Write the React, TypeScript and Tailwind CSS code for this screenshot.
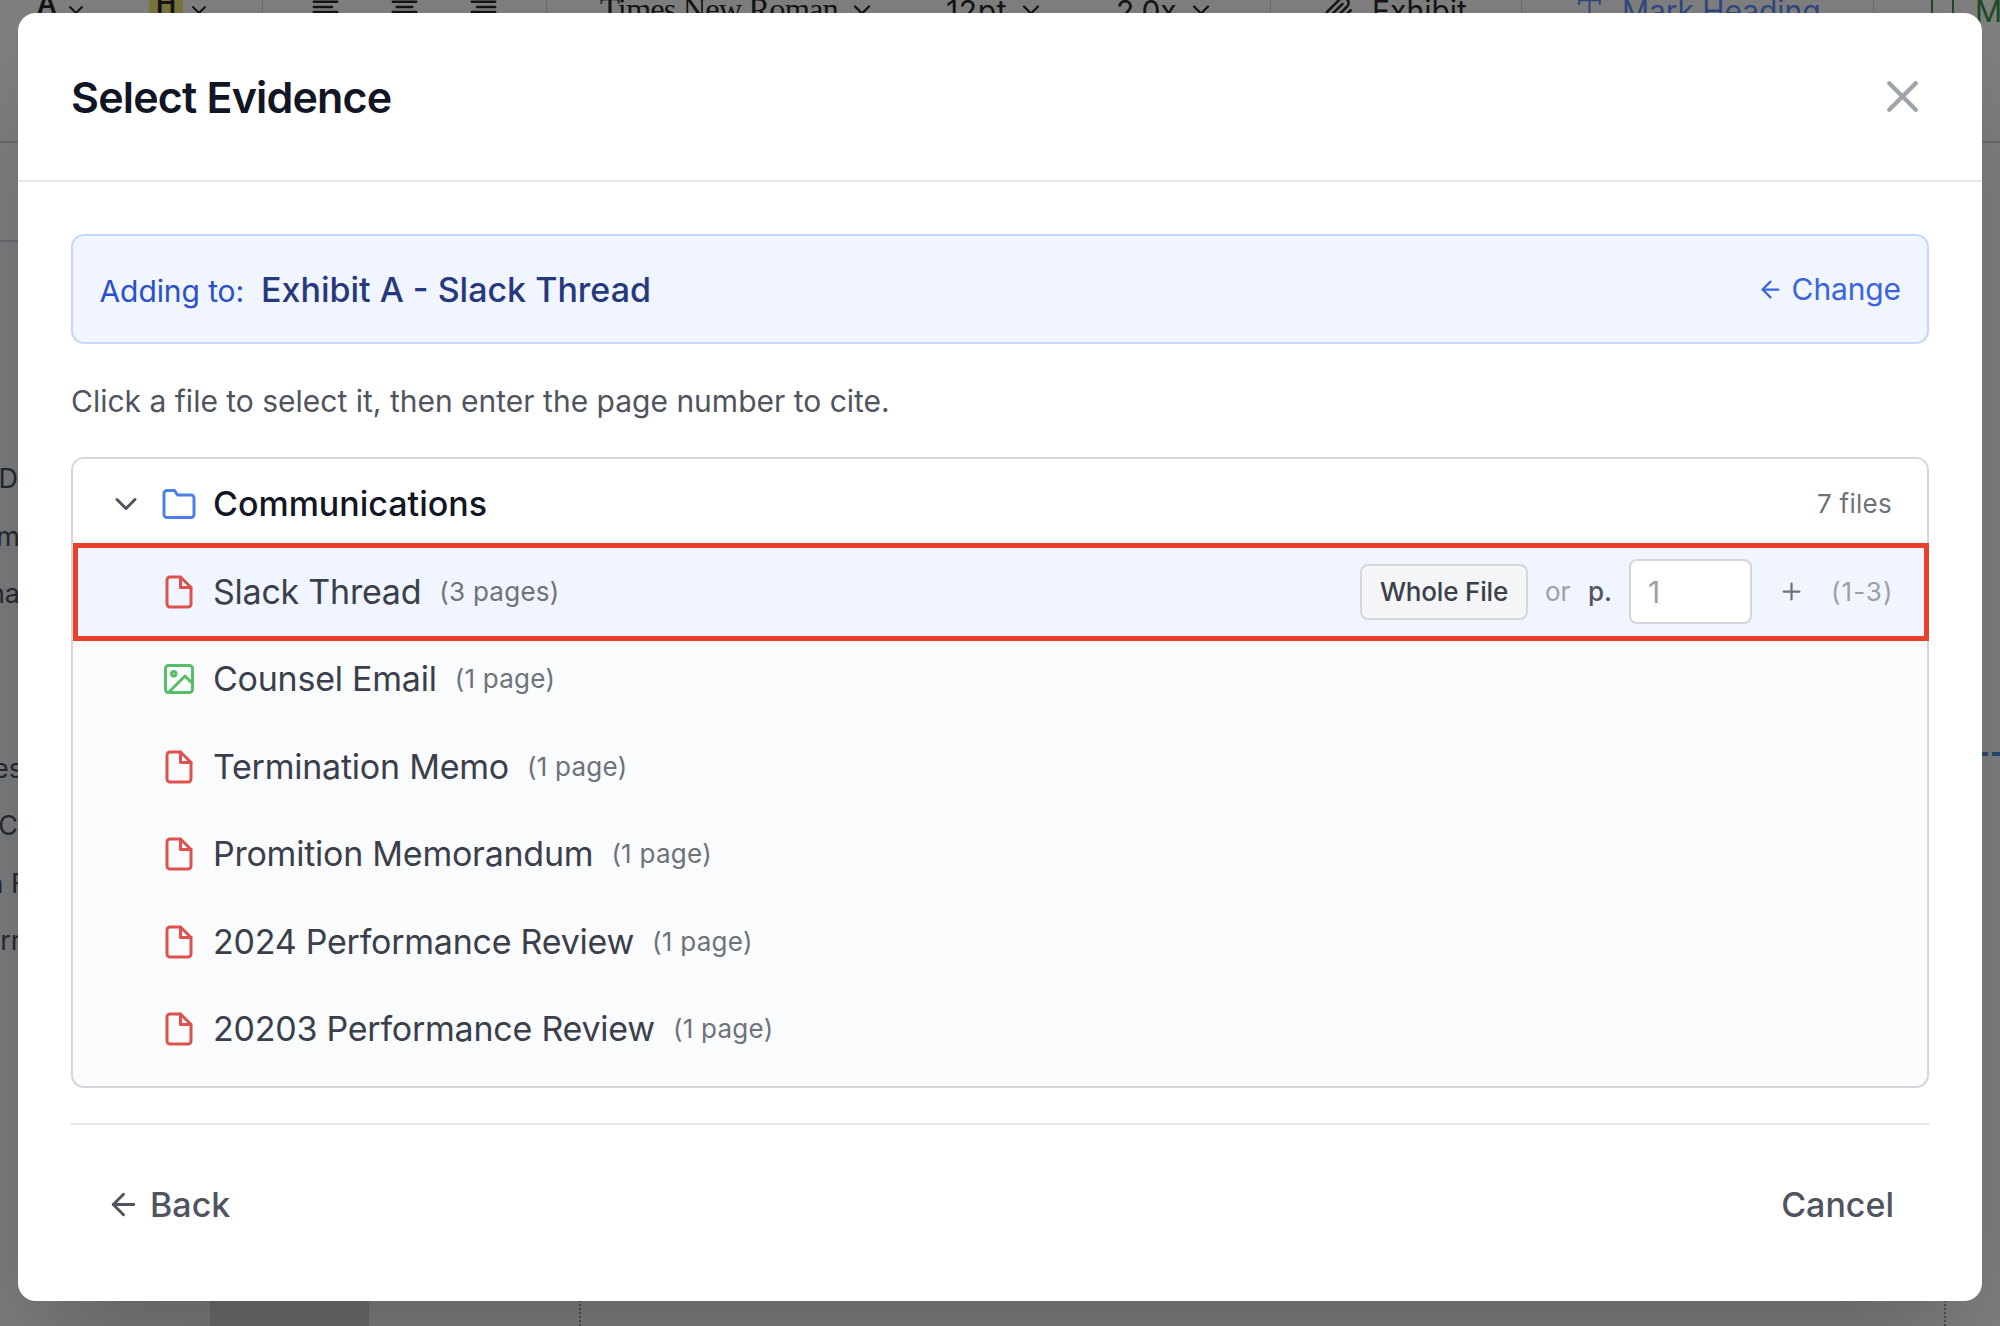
import type { ReactNode } from 'react';

type IconProps = { className?: string; strokeWidth?: number; children?: ReactNode };

function Icon({ className, strokeWidth = 2, children }: IconProps) {
  return (
    <svg
      className={className}
      viewBox="0 0 24 24"
      fill="none"
      stroke="currentColor"
      strokeWidth={strokeWidth}
      strokeLinecap="round"
      strokeLinejoin="round"
    >
      {children}
    </svg>
  );
}

const ChevronDown = (p: IconProps) => (
  <Icon {...p}>
    <polyline points="6 9 12 15 18 9" />
  </Icon>
);

const ArrowLeft = (p: IconProps) => (
  <Icon {...p}>
    <line x1="19" y1="12" x2="5" y2="12" />
    <polyline points="12 19 5 12 12 5" />
  </Icon>
);

const FileIcon = (p: IconProps) => (
  <Icon {...p}>
    <path d="M13 2H6a2 2 0 0 0-2 2v16a2 2 0 0 0 2 2h12a2 2 0 0 0 2-2V9z" />
    <polyline points="13 2 13 9 20 9" />
  </Icon>
);

const ImageIcon = (p: IconProps) => (
  <Icon {...p}>
    <rect x="3" y="3" width="18" height="18" rx="2" />
    <circle cx="8.5" cy="8.5" r="1.5" />
    <polyline points="21 15 16 10 5 21" />
  </Icon>
);

const FolderIcon = (p: IconProps) => (
  <Icon {...p}>
    <path d="M22 19a2 2 0 0 1-2 2H4a2 2 0 0 1-2-2V5a2 2 0 0 1 2-2h5l2 3h9a2 2 0 0 1 2 2z" />
  </Icon>
);

const alignLines = {
  left: [3, 17],
  center: [6, 18],
  right: [7, 21],
};

function AlignIcon({ kind, className }: { kind: keyof typeof alignLines; className?: string }) {
  const [a, b] = alignLines[kind];
  return (
    <Icon className={className}>
      <line x1="3" y1="6" x2="21" y2="6" />
      <line x1={a} y1="10" x2={b} y2="10" />
      <line x1="3" y1="14" x2="21" y2="14" />
      <line x1={a} y1="18" x2={b} y2="18" />
    </Icon>
  );
}

const Separator = ({ className = '' }: { className?: string }) => (
  <div className={`h-12 w-px shrink-0 bg-gray-300 ${className}`} />
);

function Toolbar() {
  return (
    <div className="flex h-[23px] items-center whitespace-nowrap text-[30px] leading-[36px] text-[#2b2b2b] [&>*]:shrink-0">
      <span className="-mt-[16px] ml-[37px] w-[18px] text-[27px] font-semibold">A</span>
      <ChevronDown className="-mt-1 ml-[9px] size-6" />
      <span className="-mt-[16px] ml-[61px] w-[34px] bg-[#f5e97d] text-center text-[27px] font-semibold">H</span>
      <ChevronDown className="-mt-1 ml-1 size-6" />
      <Separator className="ml-[51px]" />
      <AlignIcon kind="left" className="-mt-1 ml-[47px] size-[31px]" />
      <AlignIcon kind="center" className="-mt-1 ml-12 size-[31px]" />
      <AlignIcon kind="right" className="-mt-1 ml-12 size-[31px]" />
      <Separator className="ml-[47px]" />
      <span className="-mt-[5px] ml-[53px] w-[239px] font-['Liberation_Serif',serif] text-[32.5px] tracking-[-0.028em]">
        Times New Roman
      </span>
      <ChevronDown className="-mt-1 ml-[9px] size-7" />
      <span className="-mt-[2px] ml-[70px] w-16 tracking-[0.02em]">12pt</span>
      <ChevronDown className="-mt-1 ml-[7px] size-7" />
      <span className="-mt-[2px] ml-[71px] w-16 tracking-[-0.01em]">2.0x</span>
      <ChevronDown className="-mt-1 ml-[7px] size-7" />
      <Separator className="ml-[55px]" />
      <Icon className="ml-[52px] size-[31px]">
        <path d="M21.44 11.05l-9.19 9.19a6 6 0 0 1-8.49-8.49l9.19-9.19a4 4 0 0 1 5.66 5.66l-9.2 9.19a2 2 0 0 1-2.83-2.83l8.49-8.48" />
      </Icon>
      <span className="-mt-[2px] ml-[18px] w-[98px]">Exhibit</span>
      <Separator className="ml-[51px]" />
      <Icon className="-mt-[3px] ml-[52px] size-[31px] text-[#6090ff]" strokeWidth={1.6}>
        <polyline points="4 7 4 4 20 4 20 7" />
        <line x1="12" y1="4" x2="12" y2="20" />
        <line x1="9" y1="20" x2="15" y2="20" />
      </Icon>
      <span className="-mt-[2px] ml-[17px] w-[202px] tracking-[-0.002em] text-[#6090ff]">Mark Heading</span>
      <Separator className="ml-[49px]" />
      <div className="ml-[57px] h-8 w-[23px] border-2 border-[#3f9447]" />
      <span className="-mt-[2px] ml-[21px] text-[#3f9447]">Mark</span>
    </div>
  );
}

function OutlineRow({ children, className = '' }: { children: ReactNode; className?: string }) {
  return (
    <div className={`flex h-[57.3px] w-[18px] items-center justify-end overflow-hidden whitespace-pre ${className}`}>
      {children}
    </div>
  );
}

function EditorBackground() {
  return (
    <div className="flex h-full flex-col overflow-hidden bg-white">
      <Toolbar />
      <div className="h-[120px] border-b-2 border-gray-300" />
      <div className="h-[99px] w-[18px] border-b-2 border-gray-300" />
      <div className="flex flex-1">
        <div className="flex w-[210px] flex-col bg-[#f7f9fa] pt-[208.6px] text-[27px] leading-8 text-[#4b5563]">
          <OutlineRow>D</OutlineRow>
          <OutlineRow>
            <span className="-mr-[2px]">m</span>
          </OutlineRow>
          <OutlineRow>
            <span className="-mr-[2px]">na</span>
          </OutlineRow>
          <OutlineRow className="mt-[118px]">
            <span className="-mr-[5px]">es</span>
          </OutlineRow>
          <OutlineRow>C</OutlineRow>
          <OutlineRow>
            <span className="-mr-[9px]">n F</span>
          </OutlineRow>
          <OutlineRow>
            <span className="-mr-[3px]">err</span>
          </OutlineRow>
        </div>
        <div className="w-[159px] bg-[#dadada]" />
        <div className="flex flex-1 flex-col">
          <div className="flex h-[514px] items-end justify-end">
            <div className="flex h-1 gap-1">
              <div className="w-[14px] bg-[#4f93e0]" />
              <div className="w-2 bg-[#4f93e0]" />
            </div>
          </div>
          <div className="ml-[210px] mr-[54px] flex-1 border-x-2 border-dotted border-[#a0a0a0]" />
        </div>
      </div>
    </div>
  );
}

type Evidence = { name: string; pages: string; kind: 'pdf' | 'image'; selected?: boolean };

const files: Evidence[] = [
  { name: 'Slack Thread', pages: '(3 pages)', kind: 'pdf', selected: true },
  { name: 'Counsel Email', pages: '(1 page)', kind: 'image' },
  { name: 'Termination Memo', pages: '(1 page)', kind: 'pdf' },
  { name: 'Promition Memorandum', pages: '(1 page)', kind: 'pdf' },
  { name: '2024 Performance Review', pages: '(1 page)', kind: 'pdf' },
  { name: '20203 Performance Review', pages: '(1 page)', kind: 'pdf' },
];

function PagePicker() {
  return (
    <div className="ml-auto flex items-center whitespace-nowrap text-[26px] leading-8">
      <button className="flex h-14 w-[168px] items-center justify-center rounded-[8px] border-2 border-[#d3d6da] bg-[#f4f5f6] font-medium tracking-[-0.007em] text-[#3a3f4b]">
        Whole File
      </button>
      <span className="ml-[17px] w-[26px] text-[#9c9fa7]">or</span>
      <span className="ml-[17px] w-6 font-medium text-[#50545f]">p.</span>
      <input
        className="ml-[17px] h-[65px] w-[123px] rounded-[8px] border-2 border-[#d3d6da] bg-white px-[17px] text-[30px] placeholder:text-[#9c9fa7]"
        placeholder="1"
      />
      <Icon className="ml-[26px] size-[27px] text-[#6e727b]">
        <line x1="12" y1="5" x2="12" y2="19" />
        <line x1="5" y1="12" x2="19" y2="12" />
      </Icon>
      <span className="ml-[26px] w-[62px] tracking-[0.04em] text-[#9c9fa7]">(1-3)</span>
    </div>
  );
}

function FileRow({ file }: { file: Evidence }) {
  return (
    <div
      className={`relative flex h-[87.5px] items-center pl-[87.6px] pr-[34px] ${file.selected ? 'bg-[#f0f5ff]' : ''}`}
    >
      {file.kind === 'pdf' ? (
        <FileIcon className="size-9 text-[#dd524c]" />
      ) : (
        <ImageIcon className="size-9 text-[#58bd68]" />
      )}
      <span className="ml-[16.4px] text-[34px] leading-10 tracking-[-0.007em] text-[#3a3f4b]">{file.name}</span>
      <span className="ml-[18px] text-[26px] leading-8 tracking-[0.01em] text-[#6e727b]">{file.pages}</span>
      {file.selected && (
        <>
          <PagePicker />
          <div className="pointer-events-none absolute -bottom-[5px] -right-[2px] -top-[5px] left-0 border-[5px] border-[#e8412b]" />
        </>
      )}
    </div>
  );
}

function EvidenceDialog() {
  return (
    <div className="flex h-[1288px] w-[1964px] flex-col rounded-[18px] bg-white shadow-[0_55px_110px_-26px_rgba(0,0,0,0.25)]">
      <header className="flex h-[169px] items-center justify-between border-b-2 border-[#e4e6e8] pl-[53px] pr-[53px]">
        <h2 className="text-[43px] font-semibold leading-[52px] tracking-[-0.019em] text-[#121624]">Select Evidence</h2>
        <Icon className="size-[53px] text-[#9fa3ab]">
          <line x1="18" y1="6" x2="6" y2="18" />
          <line x1="6" y1="6" x2="18" y2="18" />
        </Icon>
      </header>

      <div className="flex flex-1 flex-col px-[53px] pt-[52px]">
        <div className="flex h-[110px] items-center rounded-[13px] border-2 border-[#c4d9f8] bg-[#f0f5ff] pl-[26.5px] pr-[26px]">
          <div className="flex items-baseline whitespace-nowrap pt-[2px]">
            <span className="text-[30px] leading-9 tracking-[-0.003em] text-[#2a50cb]">Adding to:</span>
            <span className="ml-[17px] text-[34px] font-medium leading-10 text-[#27397d]">Exhibit A - Slack Thread</span>
          </div>
          <button className="ml-auto flex items-center gap-2 text-[30px] leading-9 tracking-[-0.004em] text-[#3a64dc]">
            <ArrowLeft className="size-[27px]" />
            Change
          </button>
        </div>

        <p className="mt-[39px] text-[30px] leading-9 text-[#50545f]">
          Click a file to select it, then enter the page number to cite.
        </p>

        <div className="mt-[38px] h-[631px] rounded-[13px] border-2 border-[#d3d6da] bg-[#fafbfd]">
          <div className="flex h-[89px] items-center rounded-t-[11px] bg-white pl-[34.6px] pr-[35px]">
            <ChevronDown className="size-9 text-[#50545f]" />
            <FolderIcon className="ml-[17px] size-9 text-[#4c80e8]" />
            <span className="ml-[16.4px] text-[34px] font-medium leading-10 text-[#121624]">Communications</span>
            <span className="ml-auto text-[26px] leading-8 tracking-[0.01em] text-[#6e727b]">7 files</span>
          </div>
          {files.map((file) => (
            <FileRow key={file.name} file={file} />
          ))}
        </div>

        <footer className="mt-[35px] flex justify-between border-t-2 border-[#e4e6e8] px-[35px] pt-[60px] text-[34px] font-medium leading-10 text-[#50545f]">
          <button className="flex items-center gap-[9px]">
            <ArrowLeft className="-mt-px size-[35px]" />
            Back
          </button>
          <button>Cancel</button>
        </footer>
      </div>
    </div>
  );
}

export default function App() {
  return (
    <div className="relative h-[1326px] w-[2000px] overflow-hidden font-['Inter',sans-serif]">
      <EditorBackground />
      <div className="absolute inset-0 flex items-start justify-center bg-black/50 pt-[13px]">
        <EvidenceDialog />
      </div>
    </div>
  );
}
